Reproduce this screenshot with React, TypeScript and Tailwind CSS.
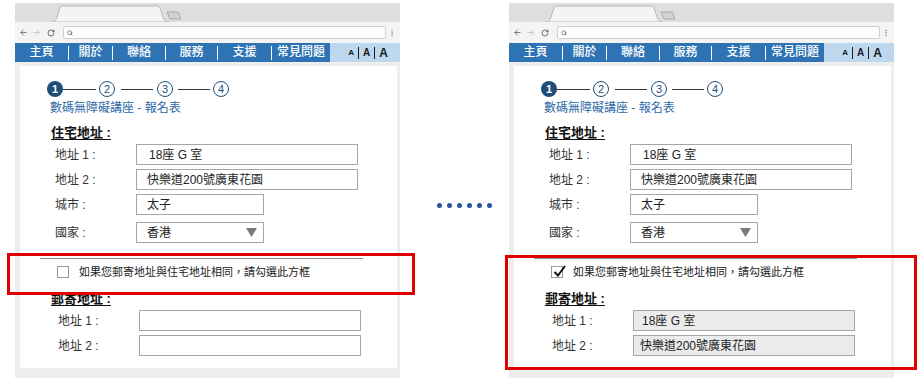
import React from 'react';
import { ArrowLeft, ArrowRight, RotateCw, Search, EllipsisVertical } from 'lucide-react';

const FONT = "font-['Liberation_Sans','Noto_Sans_CJK_TC',sans-serif]";

const NAV_ITEMS = [
  { label: '主頁', width: 'w-[53px]' },
  { label: '關於', width: 'w-[44px]' },
  { label: '聯絡', width: 'w-[53px]' },
  { label: '服務', width: 'w-[52px]' },
  { label: '支援', width: 'w-[54px]' },
  { label: '常見問題', width: 'w-[59px]' },
];

function TabStrip() {
  return (
    <div className="h-[19px] bg-[#dedede] rounded-t-[3px]">
      <svg width="385" height="19" viewBox="0 0 385 19">
        <path d="M36 19 C40 19 41 17 42 14 L45 5 C46 3 47 3 49 3 L141 3 C143 3 144 3 145 5 L148 14 C149 17 150 19 154 19 Z" fill="#f4f4f4" stroke="#b8b8b8" strokeWidth="1" />
        <path d="M152 9 L163 9 L166 16 L155 16 Z" fill="#d2d2d2" stroke="#a8a8a8" strokeWidth="1" />
      </svg>
    </div>
  );
}

function Toolbar() {
  return (
    <div className="h-[21px] bg-[#f4f4f4] flex items-center pl-[4px] pr-[4px]">
      <ArrowLeft size={9} className="text-[#555]" strokeWidth={2} />
      <ArrowRight size={9} className="text-[#bbb] ml-[4px]" strokeWidth={2} />
      <RotateCw size={8} className="text-[#555] ml-[6px]" strokeWidth={2.5} />
      <div className="ml-[8px] w-[323px] h-[13px] bg-white border border-[#d0d0d0] rounded-[2px] flex items-center pl-[3px]">
        <Search size={6} className="text-[#666]" strokeWidth={3} />
      </div>
      <EllipsisVertical size={8} className="text-[#888] ml-auto" />
    </div>
  );
}

function NavBar() {
  return (
    <div className="h-[19px] flex">
      <div className="w-[315px] bg-[#2e74b5] flex items-center">
        {NAV_ITEMS.map((item, i) => (
          <div key={item.label} className={`${item.width} flex items-center h-full`}>
            {i > 0 && <span className="w-px h-[14px] bg-white" />}
            <span className="flex-1 text-center text-white text-[12px] leading-[19px] font-medium">{item.label}</span>
          </div>
        ))}
      </div>
      <div className="flex-1 bg-[#bdd7ee] flex items-center justify-end pr-[12px] gap-[4px] text-[#1a1a1a] font-bold">
        <span className="text-[8px] leading-none">A</span>
        <span className="w-px h-[12px] bg-[#1a1a1a]" />
        <span className="text-[10px] leading-none">A</span>
        <span className="w-px h-[12px] bg-[#1a1a1a]" />
        <span className="text-[12px] leading-none">A</span>
      </div>
    </div>
  );
}

function StepCircle({ n, active }: { n: number; active?: boolean }) {
  return active ? (
    <span className="w-[16px] h-[16px] rounded-full bg-[#1f4e79] text-white text-[11px] font-bold flex items-center justify-center leading-none">
      {n}
    </span>
  ) : (
    <span className="w-[16px] h-[16px] rounded-full border border-[#1f4e79] text-[#1f4e79] text-[11px] flex items-center justify-center leading-none">
      {n}
    </span>
  );
}

function Stepper() {
  return (
    <div className="ml-[27px] flex items-center h-[16px]">
      <StepCircle n={1} active />
      <span className="w-[33px] h-px bg-[#333]" />
      <span className="ml-[3px]"><StepCircle n={2} /></span>
      <span className="ml-[6px] w-[32px] h-px bg-[#333]" />
      <span className="ml-[4px]"><StepCircle n={3} /></span>
      <span className="ml-[5px] w-[32px] h-px bg-[#333]" />
      <span className="ml-[3px]"><StepCircle n={4} /></span>
    </div>
  );
}

interface FieldProps {
  label: string;
  value?: string;
  wide?: boolean;
  select?: boolean;
  filled?: boolean;
  padClass?: string;
}

function Field({ label, value, wide, select, filled, padClass = 'pl-[10px]' }: FieldProps) {
  return (
    <div className="flex items-center">
      <span className="w-[81px] text-[12px] text-[#333]">{label}</span>
      <div
        className={`${wide ? 'w-[222px]' : 'w-[128px]'} h-[21px] border border-[#a6a6a6] ${filled ? 'bg-[#ebebeb]' : 'bg-white'} ${padClass} flex items-center text-[12px] text-[#222]`}
      >
        <span className="flex-1">{value}</span>
        {select && (
          <svg width="11" height="9" viewBox="0 0 11 9" className="mr-[6px]">
            <path d="M0 0 L11 0 L5.5 9 Z" fill="#7a7a7a" />
          </svg>
        )}
      </div>
    </div>
  );
}

function FormPanel({ checked }: { checked: boolean }) {
  return (
    <div className="bg-white h-full pt-[15px]">
      <Stepper />
      <div className="ml-[30px] mt-[3px] text-[12px] leading-[16px] text-[#2e6aa8]">數碼無障礙講座 - 報名表</div>
      <div className="ml-[31px] mt-[9px] text-[13px] leading-[16px] font-bold text-[#111] underline underline-offset-2">住宅地址 :</div>
      <div className="ml-[35px] mt-[3px] flex flex-col">
        <Field label="地址 1 :" value="18座 G 室" wide padClass="pl-[12px]" />
        <div className="mt-[4px]"><Field label="地址 2 :" value="快樂道200號廣東花園" wide /></div>
        <div className="mt-[4px]"><Field label="城市 :" value="太子" /></div>
        <div className="mt-[7px]"><Field label="國家 :" value="香港" select /></div>
      </div>
      <div className="ml-[20px] mt-[15px] w-[323px] h-px bg-[#8c8c8c]" />
      <div className="ml-[37px] mt-[7px] flex items-center h-[12px]">
        <span className="w-[12px] h-[12px] border border-[#9a9a9a] bg-white relative">
          {checked && (
            <svg width="16" height="14" viewBox="0 0 16 14" className="absolute left-[0px] top-[-3px]">
              <path d="M2.5 8 L6 11.5 L13 2" fill="none" stroke="#111" strokeWidth="2" />
            </svg>
          )}
        </span>
        <span className="ml-[10px] text-[11px] leading-[12px] text-[#222]">如果您郵寄地址與住宅地址相同，請勾選此方框</span>
      </div>
      <div className="ml-[31px] mt-[13px] text-[13px] leading-[16px] font-bold text-[#111] underline underline-offset-2">郵寄地址 :</div>
      <div className="ml-[38px] mt-[3px] flex flex-col">
        <Field label="地址 1 :" value={checked ? '18座 G 室' : ''} wide filled={checked} padClass="pl-[8px]" />
        <div className="mt-[4px]">
          <Field label="地址 2 :" value={checked ? '快樂道200號廣東花園' : ''} wide filled={checked} padClass="pl-[6px]" />
        </div>
      </div>
    </div>
  );
}

function Browser({ checked }: { checked: boolean }) {
  return (
    <div className="w-[385px] h-[375px] flex flex-col bg-[#eeeeee]">
      <TabStrip />
      <Toolbar />
      <NavBar />
      <div className="flex-1 pt-[4px] pl-[5px] pr-[3px] pb-[10px]">
        <FormPanel checked={checked} />
      </div>
    </div>
  );
}

export default function App() {
  return (
    <div className={`relative w-[924px] h-[386px] bg-white flex items-start pt-[3px] ${FONT}`}>
      <div className="ml-[15px]">
        <Browser checked={false} />
      </div>
      <div className="w-[109px] pt-[200px] pl-[37px] flex gap-[5px]">
        {[0, 1, 2, 3, 4, 5].map((i) => (
          <span key={i} className="w-[5px] h-[5px] rounded-full bg-[#24559e]" />
        ))}
      </div>
      <Browser checked />

      <div className="absolute left-[7px] top-[253px] w-[408px] h-[42px] border-[3px] border-[#e00000]" />
      <div className="absolute left-[505px] top-[255px] w-[412px] h-[115px] border-[3px] border-[#e00000]" />
    </div>
  );
}
